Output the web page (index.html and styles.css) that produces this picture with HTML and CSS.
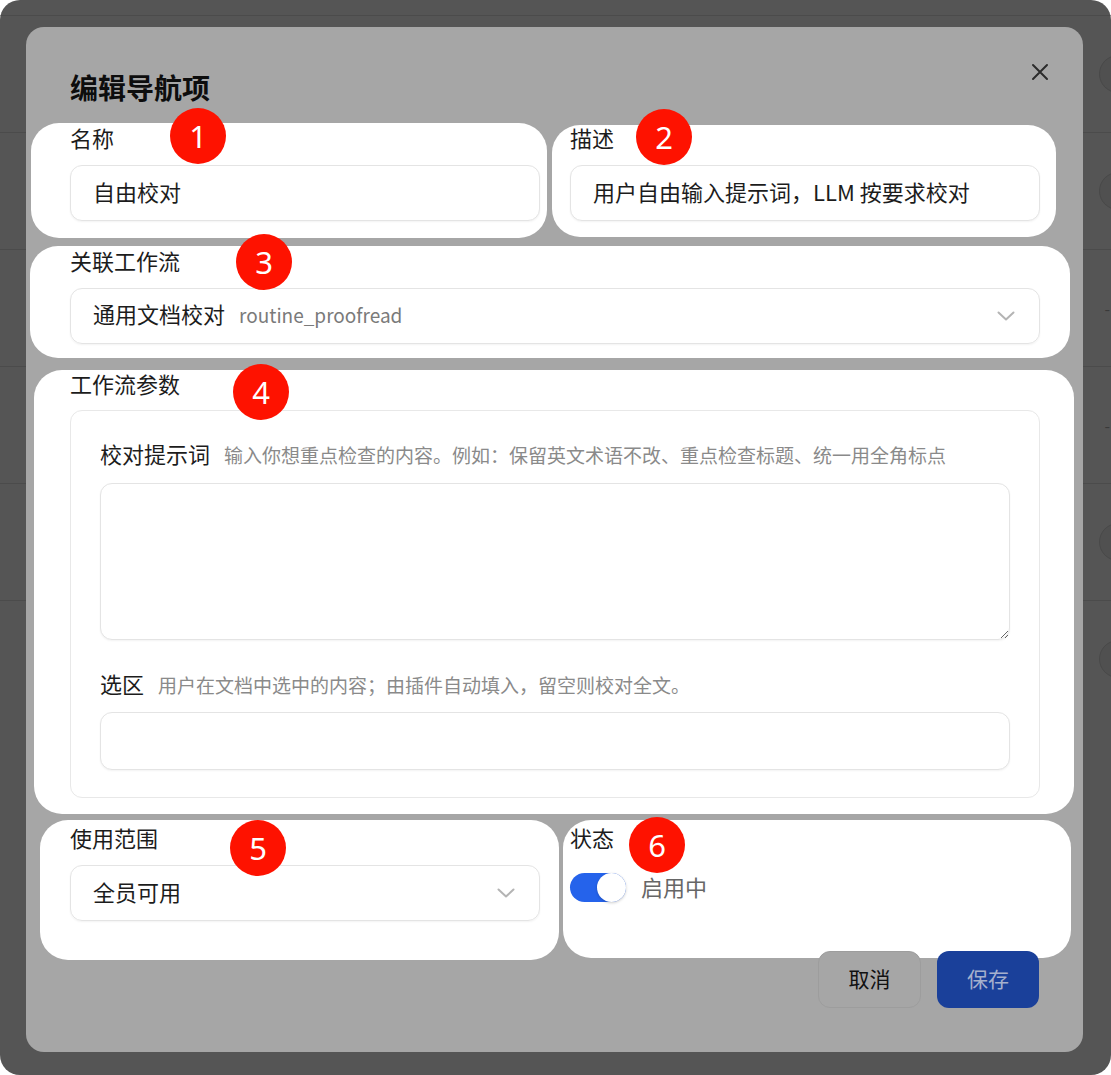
FILE: index.html
```html
<!DOCTYPE html>
<html lang="zh-CN">
<head>
  <meta charset="UTF-8">
  <meta name="viewport" content="width=device-width, initial-scale=1.0">
  <title>编辑导航项</title>
  <link rel="stylesheet" href="styles.css">
</head>
<body>
  <div class="screen">
    <!-- list page behind the dialog -->
    <div class="bg-table">
      <div class="bg-head"></div>
      <div class="bg-row"><span class="bg-avatar"></span></div>
      <div class="bg-row"><span class="bg-avatar"></span></div>
      <div class="bg-row"><span class="bg-dash">-</span></div>
      <div class="bg-row"><span class="bg-dash">-</span></div>
      <div class="bg-row"><span class="bg-avatar"></span></div>
      <div class="bg-row last"><span class="bg-avatar"></span></div>
    </div>

    <div class="modal">
      <button class="close" type="button" aria-label="关闭">
        <svg width="18" height="18" viewBox="0 0 18 18" fill="none" stroke="#2b2b2b" stroke-width="2" stroke-linecap="round">
          <path d="M2 2 L16 16 M16 2 L2 16"/>
        </svg>
      </button>
      <h2 class="modal-title">编辑导航项</h2>

      <div class="form">
        <div class="field hl-1">
          <span class="badge b-1">1</span>
          <label class="label">名称</label>
          <input class="input" value="自由校对">
        </div>

        <div class="field hl-2">
          <span class="badge b-2">2</span>
          <label class="label">描述</label>
          <input class="input" value="用户自由输入提示词，LLM 按要求校对">
        </div>

        <div class="field wide hl-3">
          <span class="badge b-3">3</span>
          <label class="label">关联工作流</label>
          <div class="select">
            <span class="select-value">通用文档校对<span class="select-sub">routine_proofread</span></span>
            <svg class="chevron" width="18" height="10" viewBox="0 0 18 10" fill="none" stroke="#b4b4b4" stroke-width="2" stroke-linecap="round" stroke-linejoin="round">
              <path d="M1.5 1.5 L9 8.5 L16.5 1.5"/>
            </svg>
          </div>
        </div>

        <div class="field wide hl-4">
          <span class="badge b-4">4</span>
          <label class="label label-card">工作流参数</label>
          <div class="param-card">
            <div class="param-label">校对提示词<span class="hint">输入你想重点检查的内容。例如：保留英文术语不改、重点检查标题、统一用全角标点</span></div>
            <textarea class="textarea"></textarea>
            <div class="param-label second">选区<span class="hint">用户在文档中选中的内容；由插件自动填入，留空则校对全文。</span></div>
            <input class="input tall">
          </div>
        </div>

        <div class="field hl-5">
          <span class="badge b-5">5</span>
          <label class="label">使用范围</label>
          <div class="select">
            <span class="select-value">全员可用</span>
            <svg class="chevron" width="18" height="10" viewBox="0 0 18 10" fill="none" stroke="#b4b4b4" stroke-width="2" stroke-linecap="round" stroke-linejoin="round">
              <path d="M1.5 1.5 L9 8.5 L16.5 1.5"/>
            </svg>
          </div>
        </div>

        <div class="field hl-6">
          <span class="badge b-6">6</span>
          <label class="label">状态</label>
          <div class="switch-row">
            <span class="switch"><span class="knob"></span></span>
            <span class="switch-text">启用中</span>
          </div>
        </div>
      </div>

      <div class="actions">
        <button class="btn btn-cancel" type="button">取消</button>
        <button class="btn btn-save" type="button">保存</button>
      </div>
    </div>
  </div>
</body>
</html>
```

FILE: styles.css
```css
:root {
  --backdrop: #555555;
  --dimmed: #a6a6a6;
  --text: #1c1c1c;
  --muted: #8a8a8a;
  --border: #e4e4e4;
  --badge: #fe1200;
  --blue: #2563eb;
}

html, body {
  margin: 0;
  padding: 0;
  background: #ffffff;
  font-family: "Noto Sans CJK SC", "Noto Sans", sans-serif;
  color: var(--text);
}

.screen {
  position: relative;
  width: 1111px;
  height: 1075px;
  box-sizing: border-box;
  padding: 27px 28px 23px 26px;
  background: var(--backdrop);
  border-radius: 20px;
  overflow: hidden;
}

/* faint table rows of the page under the overlay */
.bg-table {
  position: absolute;
  inset: 0;
}

.bg-head {
  height: 15px;
  border-bottom: 1px solid #4b4b4b;
}

.bg-row {
  height: 116px;
  border-bottom: 1px solid #4b4b4b;
  display: flex;
  align-items: center;
  justify-content: flex-end;
}

.bg-row.last {
  border-bottom: none;
}

.bg-avatar {
  width: 36px;
  height: 36px;
  border-radius: 50%;
  background: #505050;
  border: 1px solid #494949;
  margin-right: -26px;
}

.bg-dash {
  color: #3a3a3a;
  font-size: 16px;
  margin-right: 1px;
}

/* dialog */
.modal {
  position: relative;
  z-index: 1;
  isolation: isolate;
  height: 100%;
  box-sizing: border-box;
  padding: 42px 43px 44px 44px;
  background: var(--dimmed);
  border-radius: 18px;
}

.close {
  position: absolute;
  top: 36px;
  right: 34px;
  width: 18px;
  height: 18px;
  padding: 0;
  border: none;
  background: none;
  display: flex;
}

.modal-title {
  margin: 0 0 21px;
  font-size: 28px;
  line-height: 36px;
  font-weight: 700;
  color: #0d0d0d;
}

.form {
  display: grid;
  grid-template-columns: 470px 470px;
  column-gap: 30px;
  row-gap: 28px;
}

.field {
  position: relative;
  display: flex;
  flex-direction: column;
}

.field.wide {
  grid-column: 1 / -1;
}

/* white spotlight behind each field */
.field::before {
  content: "";
  position: absolute;
  top: var(--t);
  right: var(--r);
  bottom: var(--b);
  left: var(--l);
  background: #ffffff;
  border-radius: 28px;
  z-index: -1;
}

.hl-1 { --t: -3px; --r: -7px; --b: -17px; --l: -39px; }
.hl-2 { --t: -1px; --r: -16px; --b: -16px; --l: -18px; }
.hl-3 { --t: -3px; --r: -30px; --b: -14px; --l: -40px; }
.hl-4 { --t: -2px; --r: -34px; --b: -16px; --l: -36px; }
.hl-5 { --t: -6px; --r: -19px; --b: -39px; --l: -30px; }
.hl-6 { --t: -6px; --r: -31px; --b: -37px; --l: -7px; }

.badge {
  position: absolute;
  width: 56px;
  height: 56px;
  border-radius: 50%;
  background: var(--badge);
  color: #ffffff;
  font-family: "Noto Sans", sans-serif;
  font-size: 31px;
  line-height: 56px;
  text-align: center;
  z-index: 2;
}

.b-1 { left: 100px; top: -18px; }
.b-2 { left: 66px; top: -17px; }
.b-3 { left: 166px; top: -15px; }
.b-4 { left: 163px; top: -8px; }
.b-5 { left: 160px; top: -6px; }
.b-6 { left: 59px; top: -9px; }

.label {
  font-size: 22px;
  line-height: 22px;
  margin-bottom: 17px;
}

.label-card {
  margin-bottom: 16px;
}

.input {
  width: 100%;
  height: 56px;
  box-sizing: border-box;
  padding: 0 22px 4px;
  border: 1px solid var(--border);
  border-radius: 12px;
  background: #ffffff;
  font-family: inherit;
  font-size: 22px;
  color: var(--text);
  box-shadow: 0 1px 2px rgba(0, 0, 0, 0.05);
  outline: none;
}

.input.tall {
  height: 58px;
}

.select {
  height: 56px;
  box-sizing: border-box;
  padding: 0 24px 4px 22px;
  border: 1px solid var(--border);
  border-radius: 12px;
  display: flex;
  align-items: center;
  justify-content: space-between;
  box-shadow: 0 1px 2px rgba(0, 0, 0, 0.05);
}

.chevron {
  margin-top: 4px;
}

.select-value {
  font-size: 22px;
  line-height: 28px;
  display: flex;
  align-items: baseline;
}

.select-sub {
  font-size: 19px;
  color: #7a7a7a;
  margin-left: 14px;
}

.param-card {
  border: 1px solid #e8e8e8;
  border-radius: 12px;
  padding: 31px 29px 27px;
  display: flex;
  flex-direction: column;
}

.param-label {
  height: 22px;
  font-size: 22px;
  line-height: 22px;
  margin-bottom: 19px;
  display: flex;
  align-items: baseline;
}

.param-label.second {
  margin-top: 32px;
  margin-bottom: 18px;
}

.hint {
  font-size: 19px;
  color: var(--muted);
  margin-left: 14px;
}

.textarea {
  height: 157px;
  box-sizing: border-box;
  border: 1px solid var(--border);
  border-radius: 12px;
  padding: 14px 22px;
  font-family: inherit;
  font-size: 22px;
  resize: vertical;
  box-shadow: 0 1px 2px rgba(0, 0, 0, 0.05);
  outline: none;
}

.switch-row {
  display: flex;
  align-items: center;
  gap: 15px;
  margin-top: -9px;
  padding-top: 14px;
}

.switch {
  width: 56px;
  height: 29px;
  border-radius: 15px;
  background: var(--blue);
  display: flex;
  align-items: center;
  justify-content: flex-end;
}

.knob {
  width: 29px;
  height: 29px;
  border-radius: 50%;
  background: #ffffff;
  box-shadow: 0 1px 3px rgba(0, 0, 0, 0.2);
}

.switch-text {
  font-size: 22px;
  color: #666666;
  padding-bottom: 3px;
}

.actions {
  display: flex;
  justify-content: flex-end;
  gap: 16px;
  margin-top: 30px;
  margin-right: 1px;
}

.btn {
  height: 57px;
  border-radius: 12px;
  font-family: inherit;
  font-size: 21px;
  padding: 0 0 3px;
}

.btn-cancel {
  width: 103px;
  background: var(--dimmed);
  border: 1px solid #9d9d9d;
  color: #111111;
}

.btn-save {
  width: 102px;
  background: #1a409a;
  border: none;
  color: #a5b0cd;
}
```
